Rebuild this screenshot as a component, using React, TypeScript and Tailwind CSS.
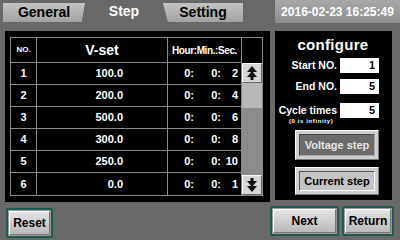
import React from 'react';

const rows = [
  { no: '1', v: '100.0', s: '2' },
  { no: '2', v: '200.0', s: '4' },
  { no: '3', v: '500.0', s: '6' },
  { no: '4', v: '300.0', s: '8' },
  { no: '5', v: '250.0', s: '10' },
  { no: '6', v: '0.0', s: '1' },
];

const ArrowUp = () => (
  <svg width="12" height="14" viewBox="0 0 12 14">
    <polygon points="6,0 11,6 1,6" fill="#111" />
    <polygon points="6,5 11,11 1,11" fill="#111" />
    <rect x="4.5" y="10" width="3" height="4" fill="#111" />
  </svg>
);

const ArrowDown = () => (
  <svg width="12" height="14" viewBox="0 0 12 14">
    <rect x="4.5" y="0" width="3" height="4" fill="#111" />
    <polygon points="6,9 11,3 1,3" fill="#111" />
    <polygon points="6,14 11,8 1,8" fill="#111" />
  </svg>
);

const Field = ({ label, value }: { label: string; value: string }) => (
  <div className="flex items-center justify-end gap-[3px]">
    <span className="text-white text-[10.5px] font-bold whitespace-nowrap">{label}</span>
    <div className="w-[39px] h-[15px] bg-white text-black text-[11px] font-bold text-right pr-[4px] leading-[15px]">
      {value}
    </div>
  </div>
);

const BottomButton = ({ text, w }: { text: string; w: string }) => (
  <div className={`${w} h-[30px] border-2 border-[#1e5a4f] rounded-[2px] p-[1px] bg-[#9a9a9a]`}>
    <div className="w-full h-full bg-gradient-to-b from-[#e4e4e4] to-[#b9b9b9] border border-t-white border-l-white border-r-[#777] border-b-[#777] flex items-center justify-center text-[12px] font-bold text-black">
      {text}
    </div>
  </div>
);

export default function App() {
  return (
    <div
      className="w-[400px] h-[240px] bg-[#686868] flex flex-col overflow-hidden"
      style={{ fontFamily: '"Liberation Sans", Arial, sans-serif' }}
    >
      {/* tab bar */}
      <div className="h-[31px] flex items-start">
        <div className="mt-[3px] ml-[3px] w-[82px] h-[19px] bg-gradient-to-b from-[#c4c4c4] to-[#a2a2a2] [clip-path:polygon(0_0,100%_0,96%_100%,0_100%)] flex items-center justify-center text-[14px] font-bold text-black">
          General
        </div>
        <div className="w-[78px] h-[22px] flex items-center justify-center text-[14px] font-bold text-white">
          Step
        </div>
        <div className="mt-[3px] w-[80px] h-[19px] bg-gradient-to-b from-[#c4c4c4] to-[#a2a2a2] [clip-path:polygon(0_0,100%_0,100%_100%,6%_100%)] flex items-center justify-center text-[14px] font-bold text-black">
          Setting
        </div>
        <div className="ml-auto w-[125px] h-[23px] bg-gradient-to-b from-[#a8a8a8] to-[#8e8e8e] flex items-center justify-center text-[12px] font-bold text-white">
          2016-02-23 16:25:49
        </div>
      </div>

      {/* main */}
      <div className="flex gap-[5px] pl-[5px]">
        {/* table */}
        <div className="w-[265px] h-[171px] bg-black pt-[6px] pl-[5px]">
          <div className="w-[253px] border border-[#8a8a8a] flex">
            <div className="flex flex-col">
              <div className="flex h-[25px] border-b border-[#8a8a8a] text-white font-bold">
                <div className="w-[26px] border-r border-[#8a8a8a] flex items-center justify-center text-[8px]">NO.</div>
                <div className="w-[131px] border-r border-[#8a8a8a] flex items-center justify-center text-[14px]">V-set</div>
                <div className="w-[74px] border-r border-[#8a8a8a] flex items-center justify-center text-[10px] tracking-[-0.4px] whitespace-nowrap">Hour:Min.:Sec.</div>
              </div>
              {rows.map((r, i) => (
                <div
                  key={r.no}
                  className={`flex h-[22px] text-white font-bold text-[11px] ${i < rows.length - 1 ? 'border-b border-[#8a8a8a]' : ''}`}
                >
                  <div className="w-[26px] border-r border-[#8a8a8a] flex items-center justify-center">{r.no}</div>
                  <div className="w-[131px] border-r border-[#8a8a8a] flex items-center justify-end pr-[44px]">{r.v}</div>
                  <div className="w-[74px] border-r border-[#8a8a8a] flex items-center">
                    <span className="w-[26px] text-right">0:</span>
                    <span className="w-[27px] text-right">0:</span>
                    <span className="w-[17px] text-right">{r.s}</span>
                  </div>
                </div>
              ))}
            </div>
            {/* scrollbar */}
            <div className="flex flex-col w-[21px]">
              <div className="h-[25px]" />
              <div className="h-[20px] bg-[#d6d6d6] border border-t-white border-l-white border-r-[#666] border-b-[#666] flex items-center justify-center">
                <ArrowUp />
              </div>
              <div className="h-[25px] bg-[#b9b9b9]" />
              <div className="flex-1 bg-[#8c8c8c]" />
              <div className="h-[20px] bg-[#d6d6d6] border border-t-white border-l-white border-r-[#666] border-b-[#666] flex items-center justify-center">
                <ArrowDown />
              </div>
            </div>
          </div>
        </div>

        {/* configure panel */}
        <div className="w-[117px] h-[169px] bg-black flex flex-col items-center pt-[6px] pr-[13px]">
          <div className="text-white text-[15px] font-bold leading-[16px] pl-[12px] tracking-[0.3px]">configure</div>
          <div className="self-stretch flex flex-col gap-[5px] mt-[5px]">
            <Field label="Start NO." value="1" />
            <Field label="End NO." value="5" />
            <div className="mt-[3px]">
              <Field label="Cycle times" value="5" />
              <div className="text-white text-[6px] font-bold pl-[14px] leading-[7px] tracking-[0.6px] whitespace-nowrap">(0 is infinity)</div>
            </div>
          </div>
          <div className="mt-[5px] ml-[20px] w-[84px] h-[30px] bg-[#cfcfcf] border border-t-white border-l-white border-r-[#777] border-b-[#777] p-[3px]">
            <div className="w-full h-full bg-[#6c6c6c] border border-t-[#444] border-l-[#444] border-r-[#aaa] border-b-[#aaa] flex items-center justify-center text-[11px] font-bold text-[#e6e6e6]">
              Voltage step
            </div>
          </div>
          <div className="mt-[7px] ml-[20px] w-[84px] h-[28px] bg-[#cfcfcf] border border-t-white border-l-white border-r-[#777] border-b-[#777] p-[3px]">
            <div className="w-full h-full bg-[#c4c4c4] border border-t-[#555] border-l-[#555] border-r-white border-b-white flex items-center justify-center text-[11px] font-bold text-black">
              Current step
            </div>
          </div>
        </div>
      </div>

      {/* bottom buttons */}
      <div className="flex items-start mt-[4px] px-[6px]">
        <div className="mt-[2px]">
          <BottomButton text="Reset" w="w-[47px]" />
        </div>
        <div className="ml-auto flex gap-[3px]">
          <BottomButton text="Next" w="w-[69px]" />
          <BottomButton text="Return" w="w-[52px]" />
        </div>
      </div>
    </div>
  );
}
